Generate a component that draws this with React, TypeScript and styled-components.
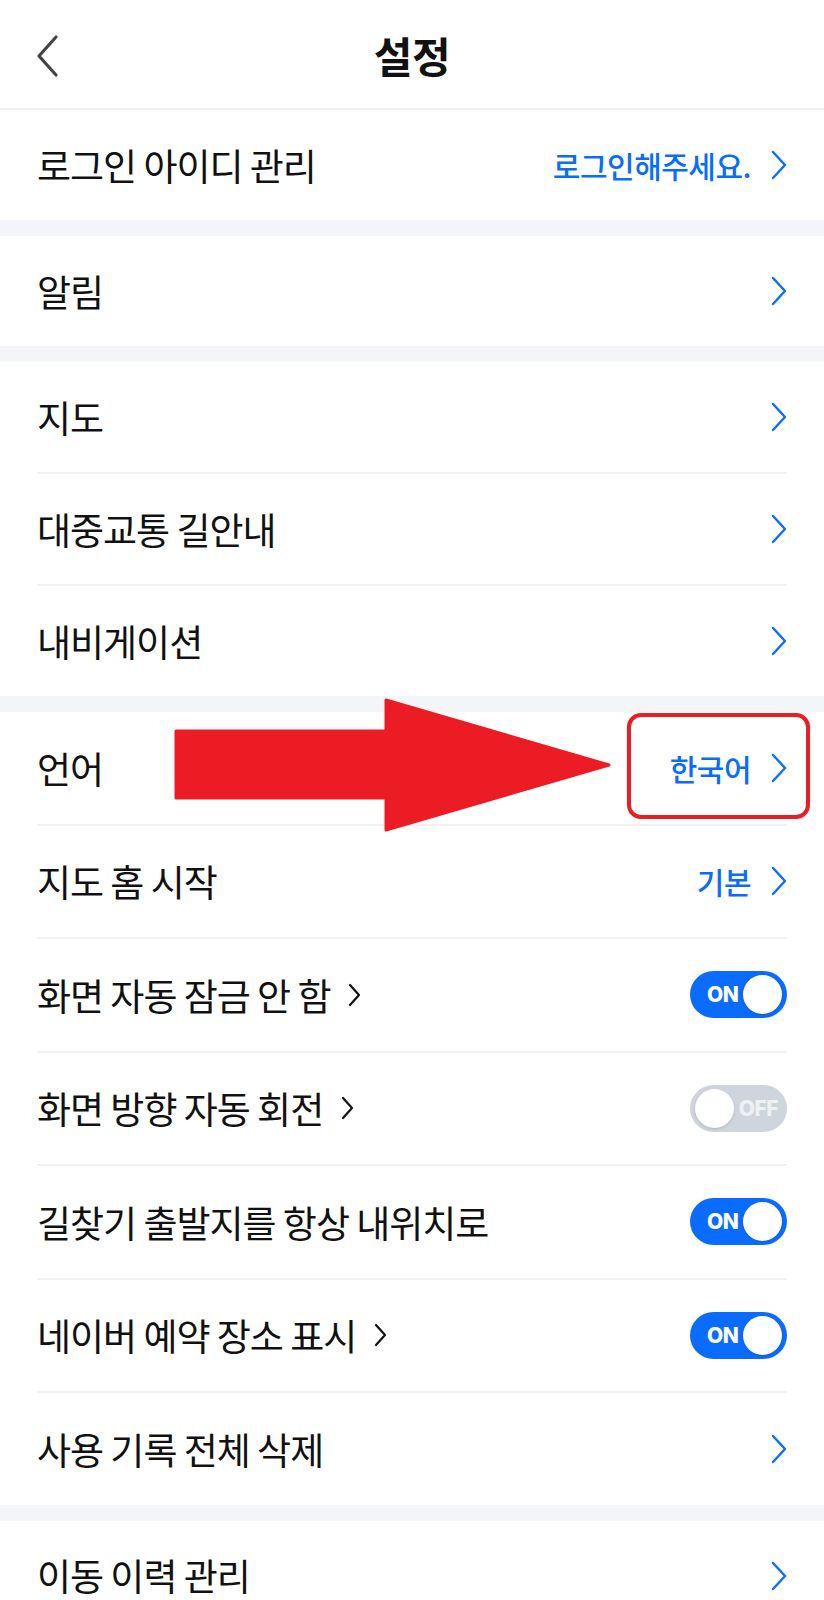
import React, { FC } from 'react'
import styled, { createGlobalStyle } from 'styled-components'

const GlobalStyle = createGlobalStyle`
  html, body {
    margin: 0;
    padding: 0;
    background: #ffffff;
  }
  body {
    font-family: "Noto Sans CJK KR", "Noto Sans", sans-serif;
    color: #111111;
    -webkit-font-smoothing: antialiased;
  }
`

const Page = styled.div`
  position: relative;
  width: 824px;
  height: 1600px;
  background: #f4f5f8;
  overflow: hidden;
`

const Header = styled.header`
  position: relative;
  display: flex;
  align-items: center;
  justify-content: center;
  height: 108px;
  background: #ffffff;
  border-bottom: 2px solid #efefef;
`

const BackButton = styled.button`
  position: absolute;
  left: 30px;
  top: 30px;
  display: flex;
  padding: 4px;
  border: 0;
  background: none;
`

const Title = styled.h1`
  margin: 0;
  font-size: 42px;
  font-weight: 700;
  letter-spacing: -0.5px;
  color: #111111;
`

const Section = styled.section`
  display: flex;
  flex-direction: column;
  background: #ffffff;

  & + & {
    margin-top: 16px;
  }
`

const Row = styled.div<{ $tall?: boolean }>`
  display: flex;
  align-items: center;
  justify-content: space-between;
  height: ${({ $tall }) => ($tall ? '111.5px' : '110px')};
  margin: 0 37px;

  & + & {
    border-top: 2px solid #f1f2f5;
  }
`

const Label = styled.div`
  display: flex;
  align-items: center;
  gap: 18px;
  font-size: 37px;
  line-height: 1.2;
  letter-spacing: -1px;
  color: #111111;
  white-space: nowrap;
`

const Trailing = styled.div`
  display: flex;
  align-items: center;
  gap: 20px;
`

const Value = styled.span`
  font-size: 30px;
  font-weight: 500;
  letter-spacing: -0.5px;
  color: #0a6cff;
`

const Switch = styled.div<{ $on?: boolean }>`
  position: relative;
  display: flex;
  align-items: center;
  justify-content: ${({ $on }) => ($on ? 'flex-start' : 'flex-end')};
  width: 97px;
  height: 47px;
  box-sizing: border-box;
  padding-left: ${({ $on }) => ($on ? '17px' : '0')};
  padding-right: ${({ $on }) => ($on ? '0' : '9px')};
  border-radius: 24px;
  background: ${({ $on }) => ($on ? '#0a6cff' : '#cfd4dd')};
  font-family: "Inter", "Noto Sans", sans-serif;
  font-size: 21px;
  font-weight: 800;
  letter-spacing: -0.5px;
  color: ${({ $on }) => ($on ? '#ffffff' : '#eef0f4')};
`

const Knob = styled.span<{ $on?: boolean }>`
  position: absolute;
  top: 4px;
  ${({ $on }) => ($on ? 'right: 5px;' : 'left: 5px;')}
  width: 39px;
  height: 39px;
  border-radius: 50%;
  background: #ffffff;
  box-shadow: 0 1px 3px rgba(0, 0, 0, 0.15);
`

const Arrow = styled.svg`
  position: absolute;
  left: 172px;
  top: 698px;
`

const Highlight = styled.div`
  position: absolute;
  left: 627px;
  top: 713px;
  width: 183px;
  height: 106px;
  box-sizing: border-box;
  border: 4px solid #ec1c24;
  border-radius: 14px;
`

const Chevron: FC<{ color?: string }> = ({ color = '#0a6cff' }) => (
  <svg width="16" height="30" viewBox="0 0 16 30" fill="none">
    <polyline points="2,2 14,15 2,28" stroke={color} strokeWidth="2.4" strokeLinecap="round" strokeLinejoin="round" />
  </svg>
)

const InlineChevron: FC = () => (
  <svg width="13" height="24" viewBox="0 0 13 24" fill="none">
    <polyline points="2,2 11,12 2,22" stroke="#111" strokeWidth="2.2" strokeLinecap="round" strokeLinejoin="round" />
  </svg>
)

type Item = {
  label: string
  value?: string
  inline?: boolean
  toggle?: 'on' | 'off'
}

type Group = { tall?: boolean; items: Item[] }

const sections: Group[] = [
  { items: [{ label: '로그인 아이디 관리', value: '로그인해주세요.' }] },
  { items: [{ label: '알림' }] },
  { items: [{ label: '지도' }, { label: '대중교통 길안내' }, { label: '내비게이션' }] },
  {
    tall: true,
    items: [
      { label: '언어', value: '한국어' },
      { label: '지도 홈 시작', value: '기본' },
      { label: '화면 자동 잠금 안 함', inline: true, toggle: 'on' },
      { label: '화면 방향 자동 회전', inline: true, toggle: 'off' },
      { label: '길찾기 출발지를 항상 내위치로', toggle: 'on' },
      { label: '네이버 예약 장소 표시', inline: true, toggle: 'on' },
      { label: '사용 기록 전체 삭제' },
    ],
  },
  { items: [{ label: '이동 이력 관리' }] },
]

const SettingRow: FC<{ item: Item; tall?: boolean }> = ({ item, tall }) => (
  <Row $tall={tall}>
    <Label>
      {item.label}
      {item.inline && <InlineChevron />}
    </Label>
    {item.toggle ? (
      <Switch $on={item.toggle === 'on'}>
        {item.toggle === 'on' ? 'ON' : 'OFF'}
        <Knob $on={item.toggle === 'on'} />
      </Switch>
    ) : (
      <Trailing>
        {item.value && <Value>{item.value}</Value>}
        <Chevron />
      </Trailing>
    )}
  </Row>
)

const App: FC = () => (
  <>
    <GlobalStyle />
    <Page>
      <Header>
        <BackButton aria-label="back">
          <svg width="26" height="44" viewBox="0 0 26 44" fill="none">
            <polyline points="22,3 5,22 22,41" stroke="#444" strokeWidth="3.2" strokeLinecap="round" strokeLinejoin="round" />
          </svg>
        </BackButton>
        <Title>설정</Title>
      </Header>
      {sections.map((group, i) => (
        <Section key={i}>
          {group.items.map((item) => (
            <SettingRow key={item.label} item={item} tall={group.tall} />
          ))}
        </Section>
      ))}
      <Arrow width="440" height="134" viewBox="0 0 440 134">
        <path d="M4 33 L214 33 L214 2 L437 67 L214 132 L214 100 L4 100 Z" fill="#ec1c24" stroke="#ec1c24" strokeWidth="3" strokeLinejoin="round" />
      </Arrow>
      <Highlight />
    </Page>
  </>
)

export default App
